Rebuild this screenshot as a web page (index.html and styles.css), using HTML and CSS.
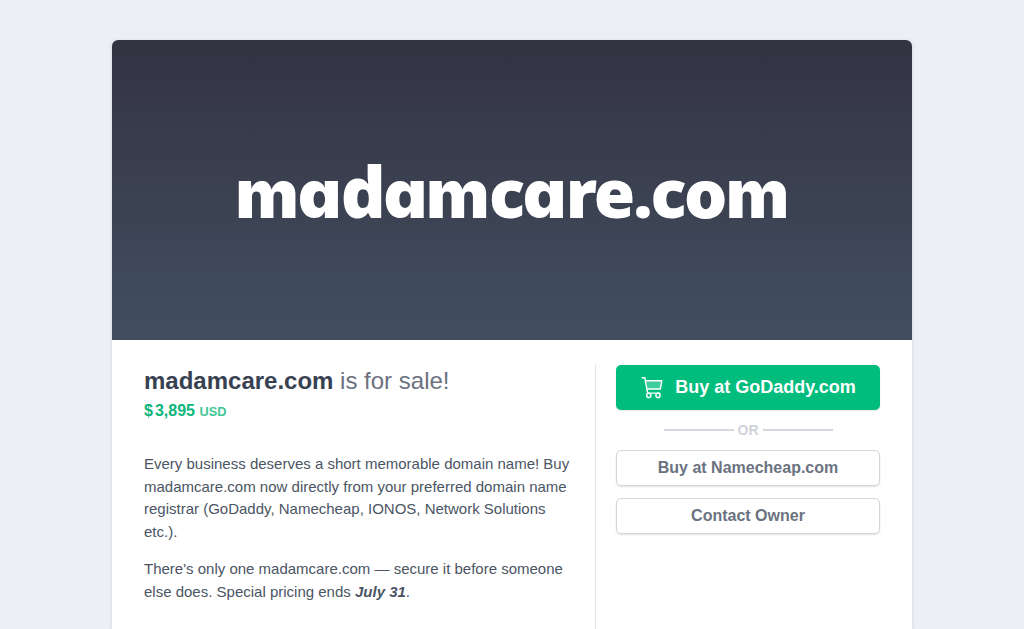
FILE: index.html
```html
<!DOCTYPE html>
<html lang="en">
<head>
    <meta charset="UTF-8">
    <meta name="viewport" content="width=device-width, initial-scale=1.0">
    <title>madamcare.com is for sale!</title>
    <link rel="stylesheet" href="styles.css">
</head>
<body>
    <div class="card">
        <div class="hero">
            <div class="logo">ma<span class="tall">d</span>am<span class="soft">c</span>a<span class="soft">re.c</span>om</div>
        </div>

        <div class="content">
            <div class="details">
                <h1><strong>madamcare.com</strong> is for sale!</h1>
                <div class="price"><span class="currency">$</span>3,895 <span class="usd">USD</span></div>

                <div class="description">
                    <p>Every business deserves a short memorable domain name! Buy madamcare.com now directly from your preferred domain name registrar (GoDaddy, Namecheap, IONOS, Network Solutions etc.).</p>
                    <p>There's only one madamcare.com — secure it before someone else does. Special pricing ends <strong><em>July 31</em></strong>.</p>
                </div>
            </div>

            <div class="actions">
                <a class="btn btn-primary" href="#">
                    <svg class="cart" viewBox="0 0 24 24" width="24" height="24">
                        <path class="basket" d="M6 5h16l-1.4 8H7.2z"/>
                        <path d="M2.2 1.7h2.6l2.8 15.4M5.4 4.8h16.4l-1.5 8.2H7M19.6 17.1H7.6"/>
                        <circle cx="8.8" cy="19.4" r="2.1"/>
                        <circle cx="18" cy="19.4" r="2.1"/>
                    </svg>
                    Buy at GoDaddy.com
                </a>
                <div class="divider">OR</div>
                <a class="btn btn-secondary" href="#">Buy at Namecheap.com</a>
                <a class="btn btn-secondary" href="#">Contact Owner</a>
            </div>
        </div>
    </div>
</body>
</html>
```

FILE: styles.css
```css
* {
    box-sizing: border-box;
}
html,
body {
    height: 100%;
    overflow: hidden;
}
body {
    margin: 0;
    padding-top: 40px;
    background: #ecf0f5;
    color: #4b5563;
    font-family: "Liberation Sans", Arial, sans-serif;
}
.card {
    width: 800px;
    height: 100%;
    margin: 0 auto;
    background: #fff;
    border-radius: 6px 6px 0 0;
    box-shadow: 0 1px 4px rgba(0, 0, 0, 0.12);
    overflow: hidden;
}
.hero {
    height: 300px;
    display: flex;
    align-items: center;
    justify-content: center;
    background: linear-gradient(#333342, #424f60);
}
.logo {
    padding-top: 3px;
    color: #fff;
    font-family: Inter, sans-serif;
    font-feature-settings: "cv11";
    font-size: 67px;
    font-weight: 900;
    line-height: 1;
    letter-spacing: -0.6px;
}
.logo .tall,
.logo .soft {
    font-family: "Noto Sans", sans-serif;
    letter-spacing: -2px;
}
.logo .tall {
    font-size: 70px;
}
.content {
    display: flex;
    padding: 25px 32px;
}
.details {
    width: 452px;
    min-height: 300px;
    padding-right: 20px;
    border-right: 1px solid #e2e4e9;
}
h1 {
    margin: 0;
    color: #6b7280;
    font-size: 24px;
    font-weight: normal;
    line-height: 32px;
}
h1 strong {
    color: #374151;
}
.price {
    color: #0cb57b;
    font-size: 16px;
    font-weight: bold;
    line-height: 28px;
}
.currency {
    margin-right: 2px;
}
.usd {
    color: #41c795;
    font-size: 12.8px;
}
.description {
    margin-top: 27px;
    font-size: 15px;
    line-height: 22.5px;
}
.description p {
    margin: 0 0 15px;
}
.actions {
    flex: 1;
    padding-left: 20px;
}
.btn {
    display: flex;
    align-items: center;
    justify-content: center;
    border-radius: 5px;
    font-weight: bold;
    text-decoration: none;
}
.btn-primary {
    height: 45px;
    gap: 11px;
    background: #00bd7e;
    color: #fff;
    font-size: 18px;
    box-shadow: 0 1px 2px rgba(0, 0, 0, 0.1);
}
.cart {
    fill: none;
    stroke: #fff;
    stroke-width: 1.4;
    stroke-linecap: round;
    stroke-linejoin: round;
}
.cart .basket {
    fill: rgba(255, 255, 255, 0.25);
    stroke: none;
}
.divider {
    display: flex;
    align-items: center;
    justify-content: center;
    gap: 4px;
    height: 40px;
    color: #d1d3db;
    font-size: 14px;
    font-weight: bold;
}
.divider::before,
.divider::after {
    content: "";
    width: 70px;
    height: 2px;
    background: #d7d8df;
}
.btn-secondary {
    height: 36px;
    margin-bottom: 12px;
    border: 1px solid #d3d6dd;
    color: #6b7280;
    font-size: 16px;
    box-shadow: 0 1px 2px rgba(0, 0, 0, 0.12);
}
```
